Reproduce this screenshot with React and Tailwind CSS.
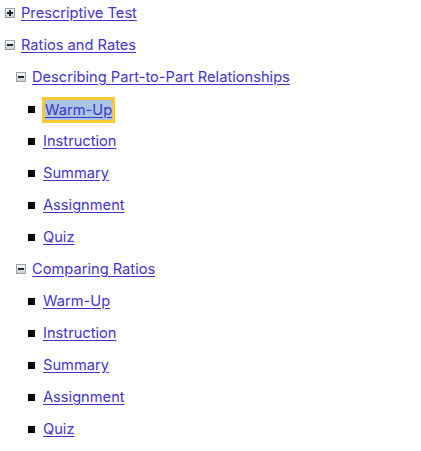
const tree = [
  { title: "Prescriptive Test", open: false },
  {
    title: "Ratios and Rates",
    open: true,
    children: [
      {
        title: "Describing Part-to-Part Relationships",
        items: ["Warm-Up", "Instruction", "Summary", "Assignment", "Quiz"],
        active: 0,
      },
      {
        title: "Comparing Ratios",
        items: ["Warm-Up", "Instruction", "Summary", "Assignment", "Quiz"],
      },
    ],
  },
];

function Toggle({ open }) {
  return (
    <span className="shrink-0 w-[10px] h-[10px] border border-[#97a1ae] bg-gradient-to-b from-[#f4f5f7] to-[#cdd1d7] relative flex items-center justify-center">
      <span className="absolute w-[6px] h-[1.5px] bg-[#222]" />
      {!open && <span className="absolute w-[1.5px] h-[6px] bg-[#222]" />}
    </span>
  );
}

function Link({ children, active }) {
  return (
    <a
      href="#"
      className={
        "underline underline-offset-2 text-[#4433cc] " +
        (active ? "inline-block -ml-[1px] border-[3px] border-[#fcc934] bg-[#a8c6e4] leading-[20px] mt-[2px]" : "")
      }
    >
      {children}
    </a>
  );
}

export default function App() {
  return (
    <div className="font-['Inter',sans-serif] text-[14.67px] leading-[20px] pl-[5px] -mt-[3px] bg-white">
      {tree.map((t) => (
        <div key={t.title}>
          <div className="flex items-center gap-[6px] h-[32px]">
            <Toggle open={t.open} />
            <Link>{t.title}</Link>
          </div>
          {t.children &&
            t.children.map((c) => (
              <div key={c.title} className="pl-[11px]">
                <div className="flex items-center gap-[6px] h-[32px]">
                  <Toggle open />
                  <Link>{c.title}</Link>
                </div>
                {c.items.map((it, i) => (
                  <div key={it} className="flex items-center gap-[8px] h-[32px] pl-[12px]">
                    <span className="shrink-0 w-[7px] h-[7px] bg-black" />
                    <Link active={c.active === i}>{it}</Link>
                  </div>
                ))}
              </div>
            ))}
        </div>
      ))}
    </div>
  );
}
